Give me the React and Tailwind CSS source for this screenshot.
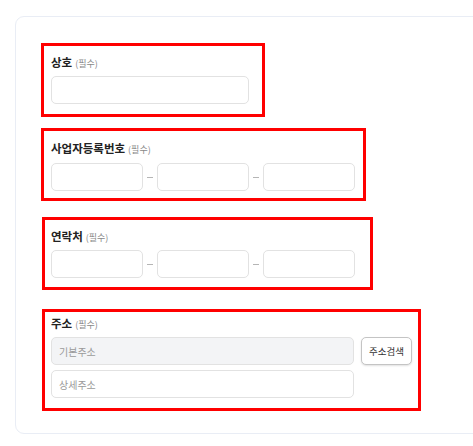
import React from 'react';

const Label = ({ children }) => (
  <div className="flex items-baseline h-4 leading-4">
    <span className="text-[11.5px] font-bold text-[#222]">{children}</span>
    <span className="ml-[3px] text-[9px] text-[#888]">(필수)</span>
  </div>
);

const Input = ({ className = '', placeholder }) => (
  <input
    type="text"
    placeholder={placeholder}
    className={`h-[28px] rounded-[5px] border border-[#e2e2e2] px-[7px] text-[10px] placeholder:text-[#9a9a9a] outline-none ${className}`}
  />
);

const Dash = () => (
  <div className="w-[14px] flex items-center justify-center">
    <div className="w-[6px] h-px bg-[#b5b5b5]" />
  </div>
);

const Split = () => (
  <div className="flex">
    <Input className="w-[92px] bg-white" />
    <Dash />
    <Input className="w-[92px] bg-white" />
    <Dash />
    <Input className="w-[92px] bg-white" />
  </div>
);

export default function App() {
  return (
    <div
      className="w-[473px] h-[446px] overflow-hidden bg-white pl-[15px] pt-[16px]"
      style={{ fontFamily: '"Noto Sans CJK KR", "Noto Sans", sans-serif' }}
    >
      <div className="w-[500px] rounded-[9px] border border-[#e9edf5] bg-white pl-[25px] pt-[26px] pb-[22px]">
        <div className="w-[224px] border-[3px] border-[#ff0000] pl-[7px] pt-[8px] pb-[10px]">
          <Label>상호</Label>
          <Input className="mt-[6px] w-[198px] block bg-white" />
        </div>

        <div className="mt-[11px] w-[325px] border-[3px] border-[#ff0000] pl-[7px] pt-[9px] pb-[7px]">
          <Label>사업자등록번호</Label>
          <div className="mt-[7px]">
            <Split />
          </div>
        </div>

        <div className="mt-[16px] ml-[1px] w-[331px] border-[3px] border-[#ff0000] pl-[6px] pt-[8px] pb-[9px]">
          <Label>연락처</Label>
          <div className="mt-[6px]">
            <Split />
          </div>
        </div>

        <div className="mt-[19px] ml-[1px] w-[379px] border-[3px] border-[#ff0000] pl-[6px] pt-[3px] pb-[10px]">
          <Label>주소</Label>
          <div className="mt-[6px] flex gap-[7px]">
            <Input className="w-[303px] bg-[#f3f4f6]" placeholder="기본주소" />
            <button className="w-[51px] h-[28px] rounded-[5px] border border-[#c4c4c4] bg-white text-[9.5px] text-[#333] shadow-[0_1px_2px_rgba(0,0,0,0.12)]">
              주소검색
            </button>
          </div>
          <Input className="mt-[5px] w-[303px] block bg-white" placeholder="상세주소" />
        </div>
      </div>
    </div>
  );
}
